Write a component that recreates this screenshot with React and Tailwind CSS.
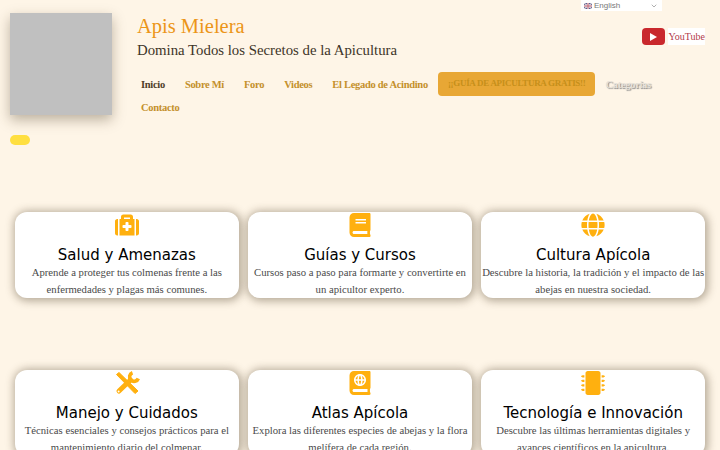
import React from 'react';
import { FaMedkit, FaBook, FaGlobe, FaAtlas, FaMicrochip } from 'react-icons/fa';
import { ChevronDown } from 'lucide-react';

const NAV = ['Sobre Mí', 'Foro', 'Videos', 'El Legado de Acindino'];

// wrench crossed with a screwdriver, none of the packs has this exact shape
const ToolsIcon = ({ className }) => (
  <svg viewBox="0 0 26 24" fill="none" stroke="currentColor" className={className}>
    <path d="M2.5 3.5L5 1.5L24 20L21 22.5Z" fill="currentColor" strokeWidth="1" strokeLinejoin="round" />
    <path d="M5 20L16.5 9" strokeWidth="5" strokeLinecap="round" />
    <path d="M18.5 1.7A4.5 4.5 0 1 0 24.3 7.5" strokeWidth="3.6" />
    <circle cx="4.6" cy="20.4" r="1" fill="#fff" stroke="none" />
  </svg>
);

const CARDS = [
  { icon: FaMedkit, title: 'Salud y Amenazas', text: 'Aprende a proteger tus colmenas frente a las enfermedades y plagas más comunes.' },
  { icon: FaBook, title: 'Guías y Cursos', text: 'Cursos paso a paso para formarte y convertirte en un apicultor experto.' },
  { icon: FaGlobe, title: 'Cultura Apícola', text: 'Descubre la historia, la tradición y el impacto de las abejas en nuestra sociedad.' },
  { icon: ToolsIcon, title: 'Manejo y Cuidados', text: 'Técnicas esenciales y consejos prácticos para el mantenimiento diario del colmenar.' },
  { icon: FaAtlas, title: 'Atlas Apícola', text: 'Explora las diferentes especies de abejas y la flora melífera de cada región.' },
  { icon: FaMicrochip, title: 'Tecnología e Innovación', text: 'Descubre las últimas herramientas digitales y avances científicos en la apicultura.' },
];

const Flag = () => (
  <svg width="8" height="6" viewBox="0 0 10 7" preserveAspectRatio="none" className="shrink-0">
    <rect width="10" height="7" fill="#5b5f8f" />
    <path d="M0 0L10 7M10 0L0 7" stroke="#e4dfe4" strokeWidth="1.2" />
    <path d="M5 0V7M0 3.5H10" stroke="#e4dfe4" strokeWidth="2.4" />
    <path d="M5 0V7M0 3.5H10" stroke="#c2606e" strokeWidth="1.1" />
  </svg>
);

const Card = ({ card }) => {
  const Icon = card.icon;
  return (
    <div className="h-[86px] rounded-xl bg-white text-center shadow-[1px_1px_8px_2px_rgba(70,55,30,0.4)]">
      <Icon className="mx-auto mt-px h-6 w-[26px] text-[#ffb00f]" />
      <h3 className="mt-[9.5px] font-['DejaVu_Sans'] text-[15px] leading-[17px] text-black">{card.title}</h3>
      <p className="text-[10.7px] leading-[17px] text-[#4a4a4a]">{card.text}</p>
    </div>
  );
};

export default function App() {
  return (
    <div className="relative h-[450px] overflow-hidden bg-[#fef5e7] font-['Liberation_Serif',serif]">
      {/* language switcher */}
      <div className="absolute left-[581px] top-0 flex h-[11px] w-[81px] items-center gap-[2px] bg-white pl-[3px] font-['Liberation_Sans'] text-[8px] text-[#777]">
        <Flag />
        <span>English</span>
        <ChevronDown className="ml-auto mr-1 h-2 w-2 text-[#888]" />
      </div>

      <div className="flex pl-[10px] pr-[15px] pt-[13px]">
        <div>
          <div className="h-[102px] w-[102px] bg-[#c0c0c0] shadow-[0_5px_12px_rgba(70,55,30,0.35)]" />
          <div className="mt-5 h-[10px] w-5 rounded-full bg-[#ffdf40]" />
        </div>

        <div className="ml-[19px] min-w-0 flex-1">
          <div className="flex justify-between pl-[6px]">
            <div>
              <h1 className="text-[20.5px] leading-[26px] text-[#ec9518]">Apis Mielera</h1>
              <p className="mt-px text-[14.8px] leading-[20px] text-[#3d3428]">Domina Todos los Secretos de la Apicultura</p>
            </div>
            <a className="mt-[15px] flex h-[17px] items-center">
              <span className="flex h-[17px] w-[23px] items-center justify-center rounded bg-[#c9282d]">
                <span className="ml-px h-0 w-0 border-y-[4px] border-l-[7px] border-y-transparent border-l-white" />
              </span>
              <span className="ml-[3px] bg-white pl-px text-[10px] leading-[17px] text-[#b33a4a]">YouTube</span>
            </a>
          </div>

          <nav className="mt-[12px] flex flex-wrap items-center text-[10.5px] font-bold leading-[23px] tracking-[-0.3px] text-[#c4902b]">
            <a className="px-[10px] text-[#4f4029]">Inicio</a>
            {NAV.map((item) => (
              <a key={item} className="px-[10px]">{item}</a>
            ))}
            <a className="h-6 rounded-sm bg-[#e8a735] px-[10px] text-[9px] text-[#c68f1a]">¡¡GUÍA DE APICULTURA GRATIS!!</a>
            <a className="pl-[10px] pr-[5px] text-[#e6e1d8] [text-shadow:1px_1px_1px_#8a8a8a]">Categorías</a>
            <a className="px-[10px]">Contacto</a>
          </nav>
        </div>
      </div>

      <div className="mt-[67px] grid grid-cols-3 gap-x-[9.5px] gap-y-[72px] px-[15px]">
        {CARDS.map((card) => (
          <Card key={card.title} card={card} />
        ))}
      </div>
    </div>
  );
}
